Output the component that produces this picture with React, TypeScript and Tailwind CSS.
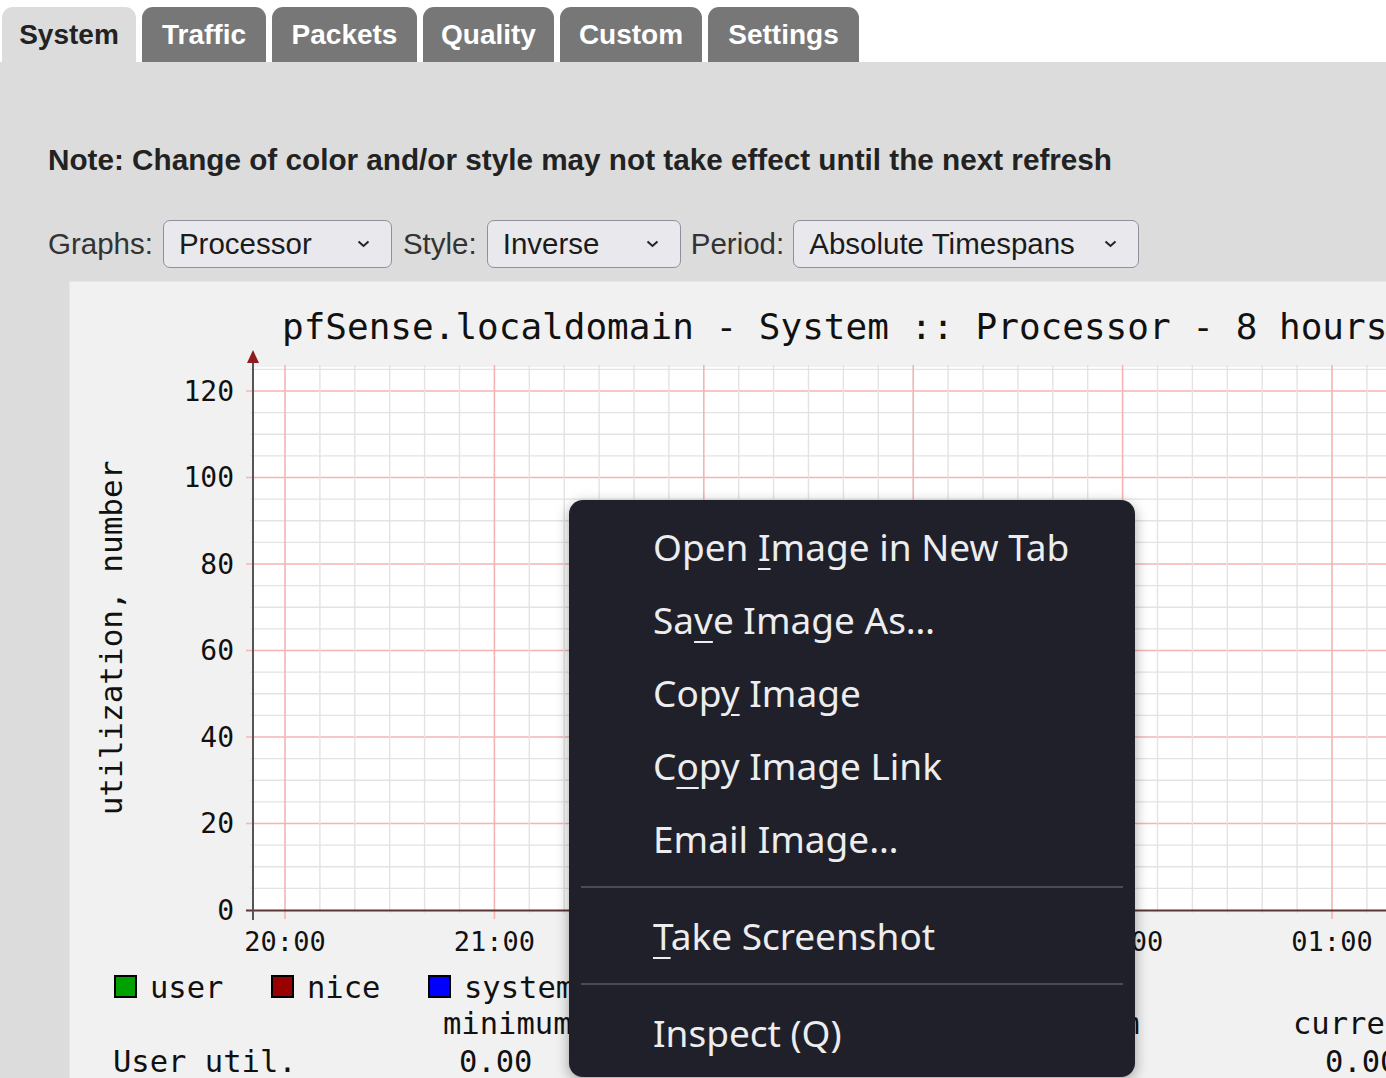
import React from 'react';

const tabs = ['System', 'Traffic', 'Packets', 'Quality', 'Custom', 'Settings'];
const tabWidths = ['w-[134px]', 'w-[124px]', 'w-[145px]', 'w-[131px]', 'w-[142px]', 'w-[151px]'];

const Chevron = () => (
  <svg width="13" height="8" viewBox="0 0 13 8" className="shrink-0">
    <polyline points="1.5,1.5 6.5,6 11.5,1.5" fill="none" stroke="#222" strokeWidth="2" />
  </svg>
);

const Select: React.FC<{ value: string; width: string }> = ({ value, width }) => (
  <div
    className={`${width} h-[48px] flex items-center justify-between pl-[15px] pr-[21px] rounded-[7px] border-[1.5px] border-[#8f8f9d] bg-[#e9e9ed] text-[#1b1b1b]`}
  >
    <span>{value}</span>
    <Chevron />
  </div>
);

const MONO = '"DejaVu Sans Mono", monospace';

const Graph = () => {
  const vLines: { x: number; major: boolean }[] = [];
  for (let k = 0; 284 + k * 34.9 < 1390; k++) vLines.push({ x: 284 + k * 34.9, major: k % 6 === 0 });
  const hLines: { y: number; major: boolean }[] = [];
  for (let j = 1; j <= 25; j++) hLines.push({ y: 909 - j * 21.625, major: j % 4 === 0 });
  const yLabels = [0, 20, 40, 60, 80, 100, 120];
  const xLabels = ['20:00', '21:00', '22:00', '23:00', '00:00', '01:00'];

  return (
    <svg width="1317" height="797" viewBox="69 281 1317 797" className="block">
      <rect x="253" y="366" width="1140" height="543" fill="#ffffff" />
      {hLines.map((l, i) => (
        <line
          key={'h' + i}
          x1={l.major ? 245 : 249}
          x2={1390}
          y1={l.y}
          y2={l.y}
          stroke={l.major ? '#f4b4b4' : '#e3e3e3'}
          strokeWidth={l.major ? 1.6 : 1.4}
        />
      ))}
      {vLines.map((l, i) => (
        <line
          key={'v' + i}
          x1={l.x}
          x2={l.x}
          y1={364}
          y2={l.major ? 918 : 912}
          stroke={l.major ? '#f4b4b4' : '#e3e3e3'}
          strokeWidth={l.major ? 1.6 : 1.4}
        />
      ))}
      <line x1="245" x2="1390" y1="909.5" y2="909.5" stroke="#5e3434" strokeWidth="2" />
      <line x1="252" x2="252" y1="358" y2="919" stroke="#555555" strokeWidth="2" />
      <polygon points="252,349 246,362 258,362" fill="#8e1c1c" />

      <text x="281" y="325" fontFamily={MONO} fontSize="36" fill="#111" dominantBaseline="central">
        pfSense.localdomain - System :: Processor - 8 hours
      </text>
      <text
        x="110"
        y="637"
        fontFamily={MONO}
        fontSize="31"
        fill="#111"
        textAnchor="middle"
        dominantBaseline="central"
        transform="rotate(-90 110 637)"
      >
        utilization, number
      </text>
      {yLabels.map((v) => (
        <text
          key={v}
          x="233"
          y={909 - v * 4.325}
          fontFamily={MONO}
          fontSize="28"
          fill="#111"
          textAnchor="end"
          dominantBaseline="central"
        >
          {v}
        </text>
      ))}
      {xLabels.map((t, i) => (
        <text
          key={t}
          x={284 + i * 209.4}
          y="940"
          fontFamily={MONO}
          fontSize="27"
          fill="#111"
          textAnchor="middle"
          dominantBaseline="central"
        >
          {t}
        </text>
      ))}

      <rect x="114" y="975" width="21" height="21" fill="#00a000" stroke="#000" strokeWidth="2" />
      <text x="149" y="986" fontFamily={MONO} fontSize="30.5" fill="#111" dominantBaseline="central">user</text>
      <rect x="271" y="975" width="21" height="21" fill="#990000" stroke="#000" strokeWidth="2" />
      <text x="306" y="986" fontFamily={MONO} fontSize="30.5" fill="#111" dominantBaseline="central">nice</text>
      <rect x="428" y="975" width="21" height="21" fill="#0000ff" stroke="#000" strokeWidth="2" />
      <text x="463" y="986" fontFamily={MONO} fontSize="30.5" fill="#111" dominantBaseline="central">system</text>

      <text x="442" y="1022" fontFamily={MONO} fontSize="30.5" fill="#111" dominantBaseline="central">minimum</text>
      <text x="727" y="1022" fontFamily={MONO} fontSize="30.5" fill="#111" dominantBaseline="central">average</text>
      <text x="1010" y="1022" fontFamily={MONO} fontSize="30.5" fill="#111" dominantBaseline="central">maximum</text>
      <text x="1292" y="1022" fontFamily={MONO} fontSize="30.5" fill="#111" dominantBaseline="central">current</text>

      <text x="112" y="1060" fontFamily={MONO} fontSize="30.5" fill="#111" dominantBaseline="central">User util.</text>
      <text x="458" y="1060" fontFamily={MONO} fontSize="30.5" fill="#111" dominantBaseline="central">0.00</text>
      <text x="743" y="1060" fontFamily={MONO} fontSize="30.5" fill="#111" dominantBaseline="central">0.00</text>
      <text x="1026" y="1060" fontFamily={MONO} fontSize="30.5" fill="#111" dominantBaseline="central">0.00</text>
      <text x="1324" y="1060" fontFamily={MONO} fontSize="30.5" fill="#111" dominantBaseline="central">0.00</text>
    </svg>
  );
};

const MenuItem: React.FC<{ children: React.ReactNode }> = ({ children }) => (
  <div className="h-[73px] flex items-center pl-[84px] whitespace-nowrap">{children}</div>
);

const Sep = () => (
  <div className="h-[24px] flex items-center px-[12px]">
    <div className="h-[2px] w-full bg-[#4a4b55]" />
  </div>
);

const Key: React.FC<{ children: React.ReactNode }> = ({ children }) => (
  <span className="underline decoration-2 underline-offset-[7px]">{children}</span>
);

const ContextMenu = () => (
  <div
    className="absolute left-[569px] top-[500px] w-[566px] h-[577px] pt-[10px] rounded-[14px] bg-[#1f2029] text-[#ededef] text-[37px] shadow-[0_4px_14px_rgba(0,0,0,0.35)]"
    style={{ fontFamily: '"Noto Sans", sans-serif' }}
  >
    <MenuItem>
      <span>Open <Key>I</Key>mage in New Tab</span>
    </MenuItem>
    <MenuItem>
      <span>Sa<Key>v</Key>e Image As…</span>
    </MenuItem>
    <MenuItem>
      <span>Cop<Key>y</Key> Image</span>
    </MenuItem>
    <MenuItem>
      <span>C<Key>o</Key>py Image Link</span>
    </MenuItem>
    <MenuItem>
      <span>Email Image…</span>
    </MenuItem>
    <Sep />
    <MenuItem>
      <span><Key>T</Key>ake Screenshot</span>
    </MenuItem>
    <Sep />
    <MenuItem>
      <span>Inspect (Q)</span>
    </MenuItem>
  </div>
);

export default function App() {
  return (
    <div
      className="relative w-[1386px] h-[1078px] overflow-hidden bg-white flex flex-col"
      style={{ fontFamily: '"Liberation Sans", Arial, sans-serif' }}
    >
      <div className="h-[62px] shrink-0 flex items-end gap-[6px] pl-[2px]">
        {tabs.map((t, i) => (
          <div
            key={t}
            className={`${tabWidths[i]} h-[55px] flex items-center justify-center rounded-t-[11px] text-[28px] font-bold ${
              i === 0 ? 'bg-[#dcdcdc] text-[#222]' : 'bg-[#777777] text-white'
            }`}
          >
            {t}
          </div>
        ))}
      </div>

      <div className="flex-1 bg-[#dcdcdc] flex flex-col">
        <div className="pt-[80px] pl-[48px] h-[158px] text-[29.7px] leading-[36px] font-bold text-[#222]">
          Note: Change of color and/or style may not take effect until the next refresh
        </div>
        <div className="pl-[48px] flex items-center h-[48px] text-[29.5px] text-[#333]">
          <span className="mr-[10px]">Graphs:</span>
          <Select value="Processor" width="w-[229px]" />
          <span className="ml-[11px] mr-[10px]">Style:</span>
          <Select value="Inverse" width="w-[194px]" />
          <span className="ml-[10px] mr-[9px]">Period:</span>
          <Select value="Absolute Timespans" width="w-[346px]" />
        </div>
        <div className="mt-[13px] ml-[69px] flex-1 bg-[#f1f1f1] border-l border-t border-[#e6e6e6] overflow-hidden">
          <Graph />
        </div>
      </div>

      <ContextMenu />
    </div>
  );
}
